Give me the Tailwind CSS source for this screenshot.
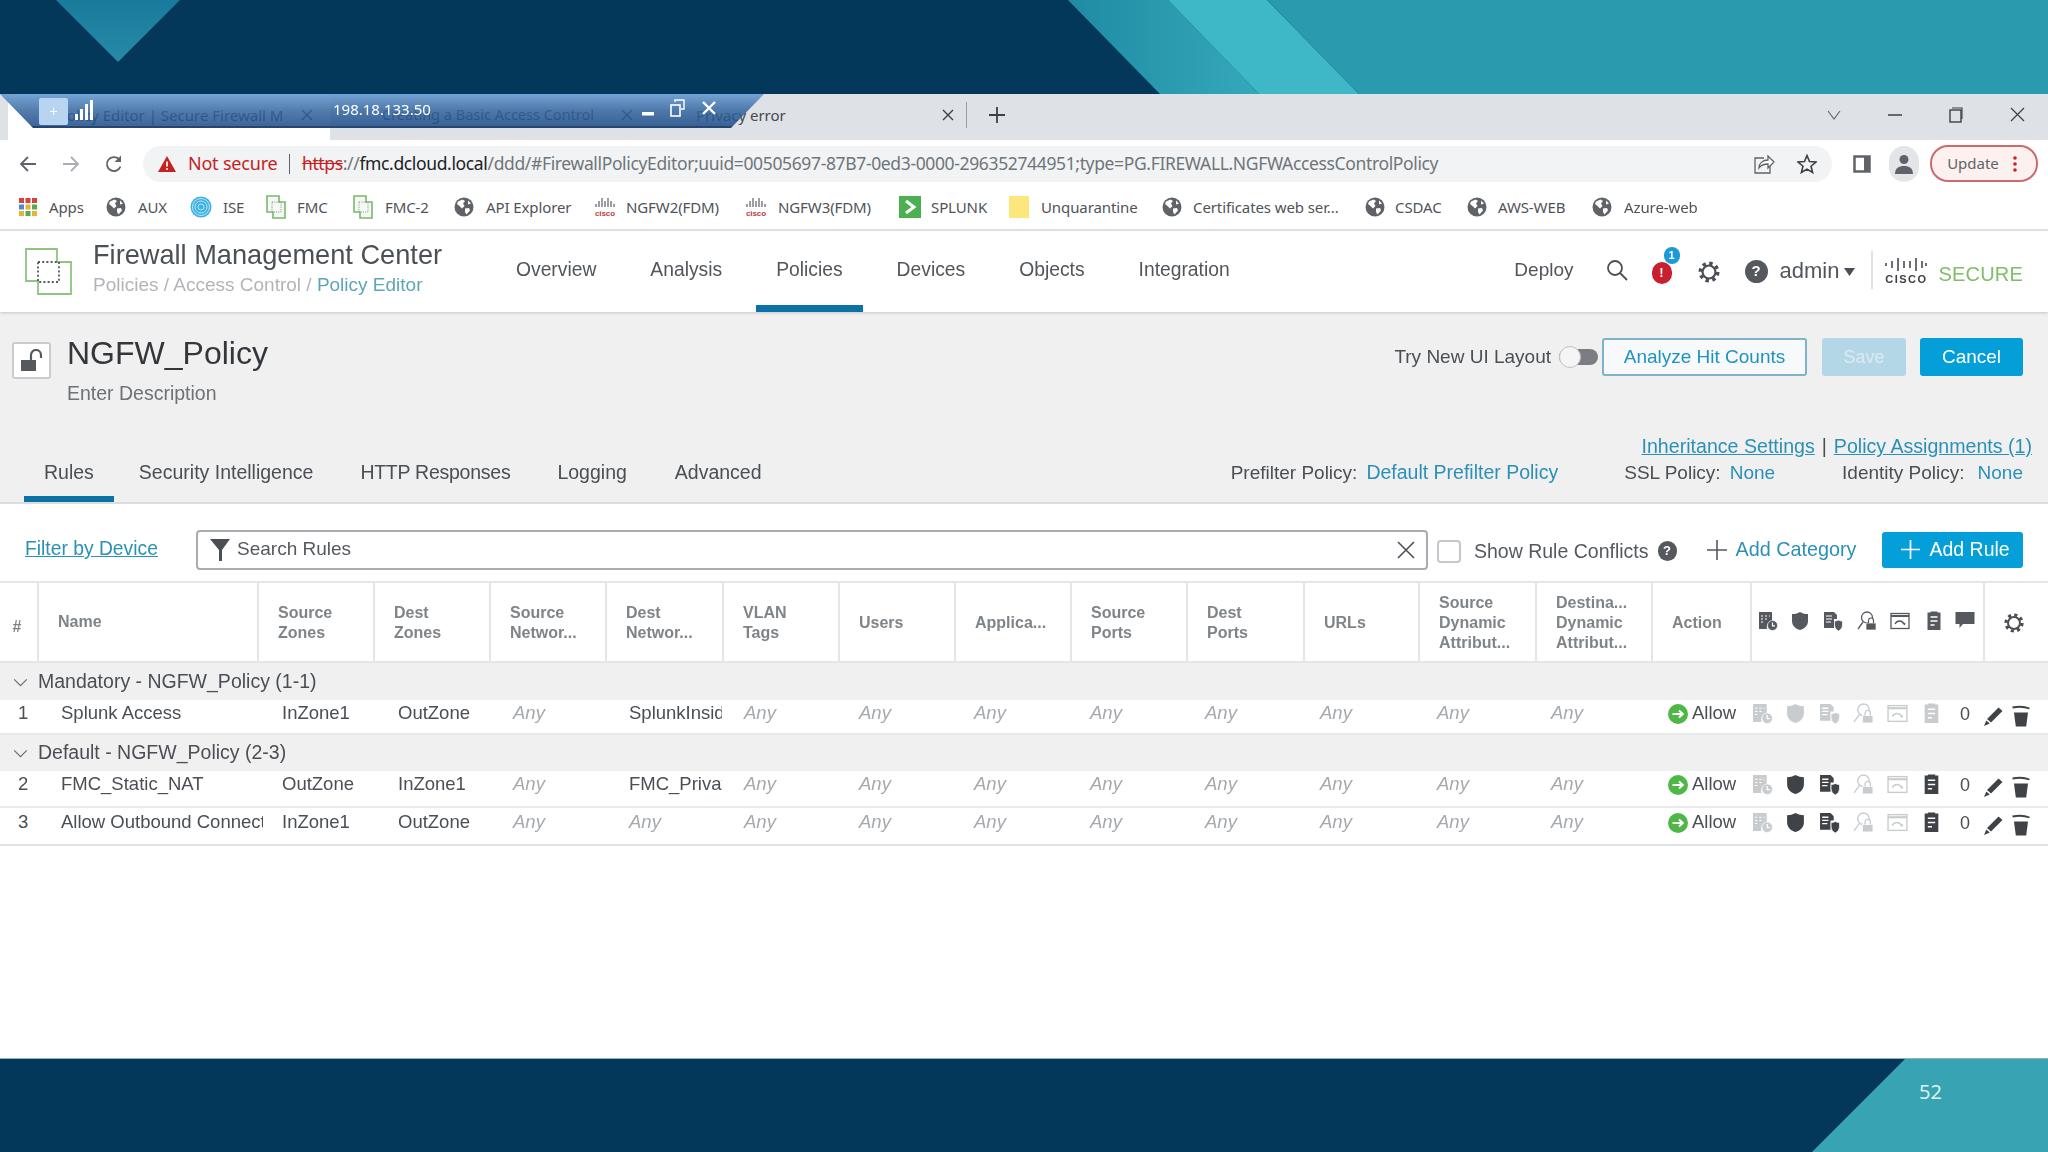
<!DOCTYPE html>
<html lang="en">
<head>
<meta charset="utf-8">
<title>Firewall Management Center</title>
<script src="https://cdn.jsdelivr.net/npm/@tailwindcss/browser@4"></script>
</head>
<body class="bg-white">
<svg class="hidden" xmlns="http://www.w3.org/2000/svg">
  <symbol id="globe" viewBox="0 0 20 20"><circle cx="10" cy="10" r="9.5" fill="#5f6368"/><path d="M4 4.5 8.5 2.5 11 4 9 6.5 10.5 9 8 11.5 5.5 9 3 7ZM11 11.5 15 11 16 13.5 12.5 17.5 11 15ZM14 3.5 17 6.5 14 7.5Z" fill="#fff"/></symbol>
  <symbol id="fmcb" viewBox="0 0 22 24"><path d="M2 1h12v6h6v16H8v-6H2Z" fill="#f4faf2" stroke="#79b96b" stroke-width="1.6"/><rect x="7" y="7" width="9" height="10" fill="none" stroke="#7d8c9c" stroke-dasharray="1 1.3"/></symbol>
  <symbol id="ciscob" viewBox="0 0 22 24"><g stroke="#5a5f66" stroke-width="1.200"><path d="M2 9v3M5 6v6M8 3v9M11 6v6M14 3v9M17 6v6M20 9v3"/></g><text x="11" y="21" text-anchor="middle" font-family="Liberation Sans" font-weight="700" font-size="8" fill="#b3424a">cisco</text></symbol>
  <symbol id="i-sched" viewBox="0 0 20 20"><path d="M1 1h13v9a6 6 0 0 0-5 8H1Z" fill="currentColor"/><path d="M3 5h2M7 5h2M11 5h1M3 8h2M7 8h2M3 11h2" stroke="#fff" stroke-width="1"/><circle cx="14.5" cy="14.5" r="5" fill="currentColor" stroke="#fff" stroke-width=".6"/><path d="M14.5 11.5v3.3h2.5" stroke="#fff" stroke-width="1.2" fill="none"/></symbol>
  <symbol id="i-shield" viewBox="0 0 20 20"><path d="M10 1c3 1.700 5 2 8 2v7c0 5-4 8-8 9-4-1-8-4-8-9V3c3 0 5-.3 8-2Z" fill="currentColor"/></symbol>
  <symbol id="i-docsh" viewBox="0 0 20 20"><path d="M1 1h10l3 3v4h-3v9H1Z" fill="currentColor"/><path d="M3 5h6M3 8h6M3 11h5" stroke="#fff" stroke-width="1.2"/><path d="M15.500 9c1.300.8 2.500 1 4 1v4c0 3-2 5-4 6-2-1-4-3-4-6v-4c1.500 0 2.700-.2 4-1Z" fill="currentColor" stroke="#fff" stroke-width=".7"/></symbol>
  <symbol id="i-user" viewBox="0 0 20 20"><circle cx="10" cy="6.500" r="5.500" fill="none" stroke="currentColor" stroke-width="1.300"/><path d="M6 11 1 18" stroke="currentColor" stroke-width="1.300"/><rect x="9" y="12" width="10" height="7" fill="currentColor" stroke="#fff" stroke-width=".7"/><path d="M11.500 12V9.500a2.500 2.500 0 0 1 5 0V12" fill="#fff" stroke="currentColor" stroke-width="1.200"/></symbol>
  <symbol id="i-win" viewBox="0 0 20 20"><rect x="1" y="2.500" width="18" height="15" fill="none" stroke="currentColor" stroke-width="1.300"/><path d="M1 5h18" stroke="currentColor" stroke-width="2"/><path d="M5 13c2-4 7-4 9 0" fill="none" stroke="currentColor" stroke-width="1.300"/><path d="M14.800 14.500 12.500 12.500 15.500 11.500Z" fill="currentColor"/></symbol>
  <symbol id="i-clip" viewBox="0 0 20 20"><path d="M3.500 1.500h3V.500h7v1h3V19h-13Z" fill="currentColor"/><path d="M6.500 6h7M6.500 10h7M6.500 14h4" stroke="#fff" stroke-width="1.300"/></symbol>
  <symbol id="i-comment" viewBox="0 0 20 20"><path d="M.5 2h19v12H8l-3.500 4v-4h-4Z" fill="currentColor"/></symbol>
  <symbol id="i-pencil" viewBox="0 0 20 20"><path d="M14.500 1.500 18.500 5 7 16.500l-4-3.500ZM2.300 14.500l3.500 3L0 20Z" fill="currentColor"/></symbol>
  <symbol id="i-trash" viewBox="0 0 20 22"><path d="M3 7.500h14l-1.800 14H4.800Z" fill="currentColor"/><path d="M1.500 2.500c6-1.200 11.500-1.200 17 1" fill="none" stroke="currentColor" stroke-width="1.800"/></symbol>
  <symbol id="i-gear" viewBox="0 0 24 24"><circle cx="12" cy="12" r="6.500" fill="none" stroke="currentColor" stroke-width="2.200"/><circle cx="12" cy="12" r="8.800" fill="none" stroke="currentColor" stroke-width="3.400" stroke-dasharray="3.400 3.510"/></symbol>
  <symbol id="i-allow" viewBox="0 0 20 20"><circle cx="10" cy="10" r="10" fill="#4fb748"/><path d="M4.500 10H14M11 6.500l3.800 3.500-3.800 3.500" stroke="#fff" stroke-width="2" fill="none"/></symbol>
  <symbol id="i-chev" viewBox="0 0 16 10"><path d="M1 1.500 8 8.500 15 1.500" fill="none" stroke="#6b7177" stroke-width="1.400"/></symbol>
</svg>

<div class="w-[2048px] h-[1152px] overflow-hidden relative flex flex-col blur-[0.3px] font-['Liberation_Sans',Arial,sans-serif] text-[#4a4f55]">

  <!-- slide banner -->
  <div class="relative h-[94px] shrink-0 bg-[#04385a]">
    <svg class="absolute inset-0" width="2048" height="94" viewBox="0 0 2048 94">
      <defs>
        <linearGradient id="tri" x1="0" y1="0" x2="0" y2="1"><stop offset="0" stop-color="#1a7a9b"/><stop offset="1" stop-color="#2789a8"/></linearGradient>
        <linearGradient id="stripe" x1="0" y1="0" x2="1" y2="0"><stop offset="0" stop-color="#1f8ba3"/><stop offset="1" stop-color="#35a9bb"/></linearGradient>
      </defs>
      <polygon points="56,0 180,0 118,62" fill="url(#tri)"/>
      <polygon points="1068,0 1168,0 1259,94 1160,94" fill="url(#stripe)"/>
      <polygon points="1168,0 1267,0 1359,94 1259,94" fill="#3eb7c7"/>
      <polygon points="1267,0 2048,0 2048,94 1359,94" fill="#2a9aae"/>
    </svg>
  </div>

  <!-- browser tab strip -->
  <div class="h-[46px] shrink-0 bg-[#dee1e6] flex items-stretch font-['Noto_Sans',sans-serif] text-[15px] text-[#45494e]">
    <div class="ml-[8px] w-[322px] bg-white rounded-t-[10px] flex items-center pl-[50px] pb-[4px]">
      <span class="w-[224px] whitespace-nowrap">Policy Editor | Secure Firewall M</span>
      <svg class="ml-[18px]" width="14" height="14" viewBox="0 0 14 14"><path d="M2 2 12 12M12 2 2 12" stroke="#3c4043" stroke-width="1.400"/></svg>
    </div>
    <div class="w-[330px] flex items-center pl-[52px] pb-[4px]">
      <span class="w-[214px] text-[14.500px] whitespace-nowrap">Creating a Basic Access Control</span>
      <svg class="ml-[24px]" width="14" height="14" viewBox="0 0 14 14"><path d="M2 2 12 12M12 2 2 12" stroke="#3c4043" stroke-width="1.400"/></svg>
    </div>
    <div class="w-[297px] flex items-center pl-[36px] pb-[4px]">
      <span class="w-[245px] whitespace-nowrap">Privacy error</span>
      <svg width="14" height="14" viewBox="0 0 14 14"><path d="M2 2 12 12M12 2 2 12" stroke="#3c4043" stroke-width="1.400"/></svg>
    </div>
    <div class="self-center mb-[4px] ml-[9px] w-px h-[26px] bg-[#9aa0a6]"></div>
    <svg class="self-center mb-[4px] ml-[22px]" width="16" height="16" viewBox="0 0 16 16"><path d="M8 0v16M0 8h16" stroke="#3c4043" stroke-width="1.800"/></svg>
    <div class="ml-auto flex items-center pb-[5px]">
      <svg width="14" height="10" viewBox="0 0 14 10"><path d="M1 1 7 9 13 1" fill="none" stroke="#5f6368" stroke-width="1.100"/></svg>
      <svg class="ml-[47px]" width="14" height="2" viewBox="0 0 14 2"><path d="M0 1h14" stroke="#3c4043" stroke-width="1.500"/></svg>
      <svg class="ml-[47px]" width="14" height="16" viewBox="0 0 14 16"><rect x="1" y="3" width="11" height="12" fill="none" stroke="#3c4043" stroke-width="1.400"/><path d="M3 1h10v11" fill="none" stroke="#3c4043" stroke-width="1.100"/></svg>
      <svg class="ml-[47px] mr-[23px]" width="15" height="15" viewBox="0 0 15 15"><path d="M1 1 14 14M14 1 1 14" stroke="#3c4043" stroke-width="1.200"/></svg>
    </div>
  </div>

  <!-- remote desktop connection bar (floats over the tabs) -->
  <div class="absolute left-0 top-[94px] w-[764px] h-[34px] [clip-path:polygon(0_0,764px_0,731px_100%,33px_100%)] bg-gradient-to-b from-[#6f9fd3]/95 via-[#35679f]/85 to-[#1c4a88]/85 border-b-2 border-[#26466f] flex items-center text-white">
    <div class="ml-[39px] w-[29px] h-[27px] mt-[2px] rounded-[2px] bg-[#b9d4f1] flex items-center justify-center text-white text-[14px]">+</div>
    <svg class="ml-[7px]" width="18" height="22" viewBox="0 0 18 22"><g fill="#fff"><rect x="0" y="15" width="3" height="6"/><rect x="5" y="10" width="3" height="11"/><rect x="10" y="5" width="3" height="16"/><rect x="15" y="1" width="3" height="20"/></g></svg>
    <span class="ml-[240px] mb-[2px] text-[15px] font-['Noto_Sans',sans-serif]">198.18.133.50</span>
    <svg class="ml-[211px] mt-[8px]" width="12" height="4" viewBox="0 0 12 4"><rect width="12" height="3.500" fill="#fff"/></svg>
    <svg class="ml-[16px] mb-[4px]" width="15" height="18" viewBox="0 0 15 18"><rect x="1" y="6" width="9" height="11" fill="none" stroke="#fff" stroke-width="1.600"/><path d="M5 3V1h9v9h-3" fill="none" stroke="#fff" stroke-width="1.400"/></svg>
    <svg class="ml-[17px] mb-[4px]" width="14" height="14" viewBox="0 0 14 14"><path d="M1 1 13 13M13 1 1 13" stroke="#fff" stroke-width="2.400"/></svg>
  </div>

  <!-- browser toolbar -->
  <div class="h-[45px] shrink-0 bg-white flex items-center pt-[2px]">
    <svg class="ml-[19px]" width="18" height="18" viewBox="0 0 18 18"><path d="M17 9H2M9 2 2 9l7 7" fill="none" stroke="#5f6368" stroke-width="1.800"/></svg>
    <svg class="ml-[25px]" width="18" height="18" viewBox="0 0 18 18"><path d="M1 9h15M9 2l7 7-7 7" fill="none" stroke="#a9adb2" stroke-width="1.800"/></svg>
    <svg class="ml-[25px]" width="18" height="18" viewBox="0 0 18 18"><path d="M15.500 11.500A7 7 0 1 1 14 4.200" fill="none" stroke="#5f6368" stroke-width="1.800"/><path d="M16 0.500v6.500h-6.500Z" fill="#5f6368"/></svg>
    <div class="ml-[20px] w-[1691px] h-[36px] rounded-full bg-[#f1f3f4] flex items-center font-['Noto_Sans',sans-serif]">
      <svg class="ml-[15px]" width="18" height="16" viewBox="0 0 18 16"><path d="M9 0 18 16H0Z" fill="#c5221f"/><path d="M9 5.500v5M9 12v2" stroke="#fff" stroke-width="1.700"/></svg>
      <span class="ml-[12px] w-[90px] text-[18px] tracking-[-0.2px] text-[#c5221f] whitespace-nowrap">Not secure</span>
      <span class="ml-[11px] w-px h-[20px] bg-[#5f6368]"></span>
      <span class="ml-[12px] text-[17.500px] tracking-[-0.36px] text-[#70757a] whitespace-nowrap"><span class="text-[#c5221f] line-through">https</span><span class="text-[#70757a]">://</span><span class="text-[#202124]">fmc.dcloud.local</span>/ddd/#FirewallPolicyEditor;uuid=00505697-87B7-0ed3-0000-296352744951;type=PG.FIREWALL.NGFWAccessControlPolicy</span>
      <span class="ml-auto flex items-center">
        <svg width="22" height="20" viewBox="0 0 22 20"><path d="M11 4H2v15h15v-7" fill="none" stroke="#5f6368" stroke-width="1.300"/><path d="M6 14c0-5 4-8 9-8V2l6 6-6 6v-4c-4 0-7 1-9 4Z" fill="#fff" stroke="#5f6368" stroke-width="1.300"/></svg>
        <svg class="ml-[22px] mr-[15px]" width="20" height="20" viewBox="0 0 20 20"><path d="M10 1.500 12.500 7.500 19 8 14 12.200 15.600 18.500 10 15.100 4.400 18.500 6 12.200 1 8 7.500 7.500Z" fill="none" stroke="#3c4043" stroke-width="1.600"/></svg>
      </span>
    </div>
    <svg class="ml-[21px]" width="18" height="18" viewBox="0 0 18 18"><rect x="1.500" y="1.500" width="15" height="15" fill="#fff" stroke="#5f6368" stroke-width="2.500"/><rect x="11" y="1.500" width="6" height="15" fill="#5f6368"/></svg>
    <div class="ml-[18px] w-[30px] h-[36px] rounded-full bg-[#e3e5e8] flex items-center justify-center">
      <svg width="18" height="20" viewBox="0 0 18 20"><circle cx="9" cy="5.500" r="4.500" fill="#5f6368"/><path d="M0 20c0-6 4-8 9-8s9 2 9 8Z" fill="#5f6368"/></svg>
    </div>
    <div class="ml-[11px] w-[108px] h-[37px] rounded-[18px] border-2 border-[#cd6a6c] bg-[#fdf1f0] flex items-center pl-[15px] font-['Noto_Sans',sans-serif] text-[15px] text-[#5f6368]">
      Update
      <svg class="ml-[14px]" width="4" height="16" viewBox="0 0 4 16"><g fill="#c5221f"><circle cx="2" cy="2" r="1.800"/><circle cx="2" cy="8" r="1.800"/><circle cx="2" cy="14" r="1.800"/></g></svg>
    </div>
    <div class="w-[10px]"></div>
  </div>

  <!-- bookmarks -->
  <div class="h-[46px] shrink-0 bg-white border-b-2 border-[#e2e3e5] flex items-center font-['Noto_Sans',sans-serif] text-[15px] tracking-[-0.1px] text-[#4f5358] whitespace-nowrap">
    <svg class="ml-[19px]" width="18" height="18" viewBox="0 0 18 18"><g><rect x="0" y="0" width="5" height="5" fill="#d3453c"/><rect x="6.500" y="0" width="5" height="5" fill="#d3453c"/><rect x="13" y="0" width="5" height="5" fill="#d3453c"/><rect x="0" y="6.500" width="5" height="5" fill="#4b89d8"/><rect x="6.500" y="6.500" width="5" height="5" fill="#e9b236"/><rect x="13" y="6.500" width="5" height="5" fill="#4caf50"/><rect x="0" y="13" width="5" height="5" fill="#e9b236"/><rect x="6.500" y="13" width="5" height="5" fill="#4caf50"/><rect x="13" y="13" width="5" height="5" fill="#e9b236"/></g></svg>
    <span class="ml-[12px] w-[36px]">Apps</span>
    <svg class="ml-[21px]" width="20" height="20"><use href="#globe"/></svg>
    <span class="ml-[12px] w-[31px]">AUX</span>
    <svg class="ml-[21px]" width="22" height="22" viewBox="0 0 22 22"><circle cx="11" cy="11" r="10.500" fill="#39b1e3"/><g fill="none" stroke="#bfe7f7" stroke-width="1"><circle cx="11" cy="11" r="3"/><circle cx="11" cy="11" r="6"/><circle cx="11" cy="11" r="8.500"/></g></svg>
    <span class="ml-[11px] w-[21px]">ISE</span>
    <svg class="ml-[21px]" width="22" height="24"><use href="#fmcb"/></svg>
    <span class="ml-[10px] w-[33px]">FMC</span>
    <svg class="ml-[22px]" width="22" height="24"><use href="#fmcb"/></svg>
    <span class="ml-[11px] w-[47px]">FMC-2</span>
    <svg class="ml-[22px]" width="20" height="20"><use href="#globe"/></svg>
    <span class="ml-[12px] w-[86px]">API Explorer</span>
    <svg class="ml-[22px]" width="22" height="24"><use href="#ciscob"/></svg>
    <span class="ml-[10px] w-[99px]">NGFW2(FDM)</span>
    <svg class="ml-[20px]" width="22" height="24"><use href="#ciscob"/></svg>
    <span class="ml-[11px] w-[98px]">NGFW3(FDM)</span>
    <svg class="ml-[23px]" width="22" height="22" viewBox="0 0 22 22"><rect width="22" height="22" fill="#4caf50"/><path d="M7 5 15 11 7 17" fill="none" stroke="#fff" stroke-width="3"/></svg>
    <span class="ml-[10px] w-[57px]">SPLUNK</span>
    <svg class="ml-[21px]" width="20" height="22" viewBox="0 0 20 22"><rect width="20" height="22" fill="#fbe77b"/></svg>
    <span class="ml-[12px] w-[97px]">Unquarantine</span>
    <svg class="ml-[24px]" width="20" height="20"><use href="#globe"/></svg>
    <span class="ml-[11px] w-[149px]">Certificates web ser...</span>
    <svg class="ml-[23px]" width="20" height="20"><use href="#globe"/></svg>
    <span class="ml-[10px] w-[50px]">CSDAC</span>
    <svg class="ml-[22px]" width="20" height="20"><use href="#globe"/></svg>
    <span class="ml-[11px] w-[71px]">AWS-WEB</span>
    <svg class="ml-[23px]" width="20" height="20"><use href="#globe"/></svg>
    <span class="ml-[12px]">Azure-web</span>
  </div>

  <!-- FMC header -->
  <div class="h-[81px] shrink-0 bg-white shadow-[0_1px_3px_rgba(0,0,0,0.18)] z-10 relative flex items-stretch">
    <svg class="ml-[25px] mt-[17px]" width="47" height="47" viewBox="0 0 47 47"><path d="M1 1h31v13h14v32H13V33H1Z" fill="none" stroke="#8fc483" stroke-width="1.800"/><rect x="13" y="14" width="21" height="20" fill="none" stroke="#55595e" stroke-width="1.800" stroke-dasharray="2 2.200"/></svg>
    <div class="ml-[21px] w-[403px] flex flex-col pt-[8px]">
      <div class="text-[27.200px] leading-[32px] text-[#4b5055] whitespace-nowrap">Firewall Management Center</div>
      <div class="text-[19px] leading-[24px] mt-[2px] text-[#b1b5b9] whitespace-nowrap">Policies / Access Control / <span class="text-[#5ea5b9]">Policy Editor</span></div>
    </div>
    <nav class="flex gap-[14px] text-[19.300px] text-[#51565b] h-full">
      <a class="px-[20px] h-full flex items-center pt-[4px] border-b-[7px] border-transparent">Overview</a>
      <a class="px-[20px] h-full flex items-center pt-[4px] border-b-[7px] border-transparent">Analysis</a>
      <a class="px-[20px] h-full flex items-center pt-[4px] border-b-[7px] border-[#0a72a5]">Policies</a>
      <a class="px-[20px] h-full flex items-center pt-[4px] border-b-[7px] border-transparent">Devices</a>
      <a class="px-[20px] h-full flex items-center pt-[4px] border-b-[7px] border-transparent">Objects</a>
      <a class="px-[20px] h-full flex items-center pt-[4px] border-b-[7px] border-transparent">Integration</a>
    </nav>
    <div class="ml-auto flex items-center pb-[3px] pr-[25px]">
      <span class="text-[19px] text-[#51565b]">Deploy</span>
      <svg class="ml-[32px]" width="22" height="22" viewBox="0 0 22 22"><circle cx="9" cy="9" r="7" fill="none" stroke="#4a4f55" stroke-width="1.800"/><path d="M14 14l7 7" stroke="#4a4f55" stroke-width="1.800"/></svg>
      <div class="relative ml-[24px] w-[20px] h-[22px] rounded-full bg-[#c8202f] text-white text-[13px] font-bold flex items-center justify-center mt-[5px]">!
        <span class="absolute left-[12px] top-[-15px] w-[16px] h-[17px] rounded-full bg-[#1b9ad6] text-white text-[11px] font-bold flex items-center justify-center">1</span>
      </div>
      <svg class="ml-[25px] mt-[3px] text-[#4a4f55]" width="24" height="24"><use href="#i-gear"/></svg>
      <div class="ml-[24px] mt-[3px] w-[23px] h-[23px] rounded-full bg-[#55595e] text-white text-[15px] font-bold flex items-center justify-center">?</div>
      <span class="ml-[12px] text-[22px] text-[#51565b]">admin</span>
      <svg class="ml-[5px] mt-[3px]" width="11" height="8" viewBox="0 0 11 8"><path d="M0 0h11L5.500 8Z" fill="#4a4f55"/></svg>
      <div class="ml-[16px] w-[2px] h-[38px] bg-[#dfe1e3]"></div>
      <div class="ml-[11px] flex flex-col items-center w-[44px] mt-[2px]">
        <svg width="42" height="13" viewBox="0 0 42 13"><g stroke="#3b3f44" stroke-width="1.500"><path d="M1 5v3M7 3v7M13 0v13M19 3v7M25 3v7M31 0v13M37 3v7M41 5v3"/></g></svg>
        <span class="text-[11px] leading-[12px] font-bold tracking-[1.500px] text-[#3b3f44] mt-[2px]">CISCO</span>
      </div>
      <span class="ml-[10px] mt-[7px] text-[20px] tracking-[0.2px] text-[#7fbe69]">SECURE</span>
    </div>
  </div>

  <!-- policy head (grey) -->
  <div class="h-[192px] shrink-0 bg-[#f0f0f0] border-b-2 border-[#dcdddf] flex flex-col">
    <div class="h-[125px] shrink-0 flex items-start">
      <div class="ml-[12px] mt-[30px] w-[39px] h-[37px] bg-white border-2 border-[#c9cbce] rounded-[3px] flex items-center justify-center">
        <svg width="24" height="24" viewBox="0 0 24 24"><rect x="1" y="11" width="15" height="11" fill="#55595e"/><path d="M11 11V6a5 5 0 0 1 10 0v3" fill="none" stroke="#55595e" stroke-width="2.200"/></svg>
      </div>
      <div class="ml-[16px] flex flex-col">
        <div class="mt-[21px] text-[32px] leading-[40px] text-[#33373b]">NGFW_Policy</div>
        <div class="mt-[9px] text-[19.500px] leading-[22px] text-[#6d7277]">Enter Description</div>
      </div>
      <div class="ml-auto flex items-center mt-[26px] pr-[25px]">
        <span class="text-[19px] text-[#4a4f55]">Try New UI Layout</span>
        <div class="ml-[8px] relative w-[39px] h-[16px] rounded-full bg-[#7a7e83]">
          <div class="absolute left-0 top-[-3px] w-[22px] h-[22px] rounded-full bg-[#f5f5f5] border border-[#c2c4c7]"></div>
        </div>
        <div class="ml-[4px] w-[205px] h-[38px] border-2 border-[#7fb3c9] rounded-[3px] bg-[#f7f9fa] flex items-center justify-center text-[19px] text-[#1f93c0]">Analyze Hit Counts</div>
        <div class="ml-[15px] w-[84px] h-[38px] rounded-[3px] bg-[#b3d7e6] flex items-center justify-center text-[18px] text-[#dbeaf1]">Save</div>
        <div class="ml-[14px] w-[103px] h-[38px] rounded-[3px] bg-[#049fd9] flex items-center justify-center text-[19px] text-white">Cancel</div>
      </div>
    </div>
    <div class="h-[20px] shrink-0 flex items-center justify-end pr-[16px] text-[19.600px]">
      <a class="text-[#2b90b8] underline">Inheritance Settings</a>
      <span class="mx-[7px] text-[#4a4f55]">|</span>
      <a class="text-[#2b90b8] underline">Policy Assignments (1)</a>
    </div>
    <div class="flex-1 flex items-stretch text-[19.500px] text-[#4a4f55]">
      <div class="ml-[24px] flex gap-[20px]">
        <a class="px-[20px] pb-[7px] border-b-[6px] border-[#0a72a5] flex items-center">Rules</a>
        <a class="px-[7px] -ml-[2px] flex items-center pb-[13px]">Security Intelligence</a>
        <a class="px-[7px] ml-[13px] flex items-center pb-[13px] tracking-[-0.25px]">HTTP Responses</a>
        <a class="px-[7px] ml-[13px] flex items-center pb-[13px]">Logging</a>
        <a class="px-[7px] ml-[14px] flex items-center pb-[13px]">Advanced</a>
      </div>
      <div class="ml-auto flex items-center pb-[13px] pr-[25px] text-[19px] whitespace-nowrap">
        <span>Prefilter Policy:</span><span class="ml-[9px] text-[19.500px] text-[#2b90b8]">Default Prefilter Policy</span>
        <span class="ml-[66px]">SSL Policy:</span><span class="ml-[9px] text-[#2b90b8]">None</span>
        <span class="ml-[67px]">Identity Policy:</span><span class="ml-[13px] text-[#2b90b8]">None</span>
      </div>
    </div>
  </div>

  <!-- filter row -->
  <div class="h-[79px] shrink-0 bg-white border-b-2 border-[#e4e5e7] flex items-center whitespace-nowrap pt-[14px]">
    <a class="ml-[25px] w-[133px] text-[19.300px] text-[#2b90b8] underline">Filter by Device</a>
    <div class="ml-[38px] w-[1232px] h-[40px] border-2 border-[#a9acb0] rounded-[4px] flex items-center">
      <svg class="ml-[12px]" width="20" height="22" viewBox="0 0 20 22"><path d="M0 0h20l-8 11v11H9V11Z" fill="#4a4f55"/></svg>
      <span class="ml-[7px] text-[19px] text-[#55595e]">Search Rules</span>
      <svg class="ml-auto mr-[11px]" width="18" height="18" viewBox="0 0 18 18"><path d="M1 1 17 17M17 1 1 17" stroke="#4a4f55" stroke-width="1.600"/></svg>
    </div>
    <div class="ml-[9px] w-[24px] h-[23px] bg-white border-2 border-[#c5c7ca] rounded-[4px] mt-[3px]"></div>
    <span class="ml-[13px] mt-[4px] text-[19.500px] text-[#55595e]">Show Rule Conflicts</span>
    <div class="ml-[9px] mt-[3px] w-[19px] h-[20px] rounded-full bg-[#55595e] text-white text-[13px] font-bold flex items-center justify-center">?</div>
    <svg class="ml-[30px] mt-[1px]" width="20" height="20" viewBox="0 0 20 20"><path d="M10 0v20M0 10h20" stroke="#55595e" stroke-width="1.600"/></svg>
    <span class="ml-[9px] text-[19.800px] text-[#2b90b8]">Add Category</span>
    <div class="ml-[26px] w-[141px] h-[36px] rounded-[3px] bg-[#049fd9] flex items-center text-white text-[19.500px]">
      <svg class="ml-[19px]" width="19" height="19" viewBox="0 0 19 19"><path d="M9.500 0v19M0 9.500h19" stroke="#fff" stroke-width="1.700"/></svg>
      <span class="ml-[9px]">Add Rule</span>
    </div>
  </div>

  <!-- rule table -->
  <div class="shrink-0 h-[80px] bg-white border-b-2 border-[#e4e5e7] grid grid-cols-[37px_220px_116px_116px_116px_117px_116px_116px_116px_116px_117px_115px_117px_116px_99px_233px_65px] text-[16px] leading-[20px] font-bold text-[#7f8488]">
    <div class="flex items-center justify-center pt-[10px] pr-[3px]">#</div>
    <div class="border-l-2 border-[#e4e5e7] flex items-center pl-[19px]">Name</div>
    <div class="border-l-2 border-[#e4e5e7] flex items-center pl-[19px] pt-[2px]">Source<br>Zones</div>
    <div class="border-l-2 border-[#e4e5e7] flex items-center pl-[19px] pt-[2px]">Dest<br>Zones</div>
    <div class="border-l-2 border-[#e4e5e7] flex items-center pl-[19px] pt-[2px]">Source<br>Networ...</div>
    <div class="border-l-2 border-[#e4e5e7] flex items-center pl-[19px] pt-[2px]">Dest<br>Networ...</div>
    <div class="border-l-2 border-[#e4e5e7] flex items-center pl-[19px] pt-[2px]">VLAN<br>Tags</div>
    <div class="border-l-2 border-[#e4e5e7] flex items-center pl-[19px] pt-[2px]">Users</div>
    <div class="border-l-2 border-[#e4e5e7] flex items-center pl-[19px] pt-[2px]">Applica...</div>
    <div class="border-l-2 border-[#e4e5e7] flex items-center pl-[19px] pt-[2px]">Source<br>Ports</div>
    <div class="border-l-2 border-[#e4e5e7] flex items-center pl-[19px] pt-[2px]">Dest<br>Ports</div>
    <div class="border-l-2 border-[#e4e5e7] flex items-center pl-[19px] pt-[2px]">URLs</div>
    <div class="border-l-2 border-[#e4e5e7] flex items-center pl-[19px] pt-[2px]">Source<br>Dynamic<br>Attribut...</div>
    <div class="border-l-2 border-[#e4e5e7] flex items-center pl-[19px] pt-[2px]">Destina...<br>Dynamic<br>Attribut...</div>
    <div class="border-l-2 border-[#e4e5e7] flex items-center pl-[19px] pt-[2px]">Action</div>
    <div class="border-l-2 border-[#e4e5e7] flex items-center pl-[6px] pb-[2px] text-[#55595e]">
      <svg width="20" height="20"><use href="#i-sched"/></svg>
      <svg class="ml-[12px]" width="20" height="20"><use href="#i-shield"/></svg>
      <svg class="ml-[13px]" width="20" height="20"><use href="#i-docsh"/></svg>
      <svg class="ml-[14px]" width="20" height="20"><use href="#i-user"/></svg>
      <svg class="ml-[13px]" width="20" height="20"><use href="#i-win"/></svg>
      <svg class="ml-[14px]" width="20" height="20"><use href="#i-clip"/></svg>
      <svg class="ml-[11px] mb-[3px]" width="20" height="20"><use href="#i-comment"/></svg>
    </div>
    <div class="border-l-2 border-[#e4e5e7] flex items-center justify-center pr-[6px] pt-[2px] text-[#4a4f55]">
      <svg width="22" height="22"><use href="#i-gear"/></svg>
    </div>
  </div>

  <!-- Mandatory -->
  <div class="shrink-0 h-[37px] bg-[#f0f0f0] flex items-center text-[19.500px] text-[#4a4f55]">
    <svg class="ml-[13px] mt-[1px]" width="15" height="9"><use href="#i-chev"/></svg>
    <span class="ml-[10px]">Mandatory - NGFW_Policy (1-1)</span>
  </div>
  <div class="shrink-0 h-[35px] bg-white border-b-2 border-[#e8e9ea] grid grid-cols-[37px_220px_116px_116px_116px_117px_116px_116px_116px_116px_117px_115px_117px_116px_99px_233px_65px] items-start pt-[1px] text-[18.500px] leading-[24px] text-[#4a4f55] whitespace-nowrap">
    <div class="pl-[18px]">1</div>
    <div class="pl-[24px]"><div class="w-[202px] overflow-hidden">Splunk Access</div></div>
    <div class="pl-[25px]">InZone1</div>
    <div class="pl-[25px]">OutZone</div>
    <div class="pl-[24px] italic text-[#a5a9ad]">Any</div>
    <div class="pl-[24px] overflow-hidden">SplunkInside</div>
    <div class="pl-[22px] italic text-[#a5a9ad]">Any</div>
    <div class="pl-[21px] italic text-[#a5a9ad]">Any</div>
    <div class="pl-[20px] italic text-[#a5a9ad]">Any</div>
    <div class="pl-[20px] italic text-[#a5a9ad]">Any</div>
    <div class="pl-[19px] italic text-[#a5a9ad]">Any</div>
    <div class="pl-[17px] italic text-[#a5a9ad]">Any</div>
    <div class="pl-[19px] italic text-[#a5a9ad]">Any</div>
    <div class="pl-[16px] italic text-[#a5a9ad]">Any</div>
    <div class="pl-[17px] flex items-center"><svg class="mt-[2px]" width="20" height="20"><use href="#i-allow"/></svg><span class="ml-[4px]">Allow</span></div>
    <div class="flex items-center pl-[2px] mt-[2px] text-[#c9ccce]">
      <svg width="21" height="21"><use href="#i-sched"/></svg>
      <svg class="ml-[12px]" width="21" height="21"><use href="#i-shield"/></svg>
      <svg class="ml-[13px]" width="21" height="21"><use href="#i-docsh"/></svg>
      <svg class="ml-[13px]" width="21" height="21"><use href="#i-user"/></svg>
      <svg class="ml-[13px]" width="21" height="21"><use href="#i-win"/></svg>
      <svg class="ml-[13px]" width="21" height="21"><use href="#i-clip"/></svg>
    </div>
    <div class="flex items-center -ml-[23px] mt-[-1px]">
      <span class="w-[17px] text-[18px]">0</span>
      <svg class="ml-[7px] mt-[5px] text-[#3f4347]" width="20" height="20"><use href="#i-pencil"/></svg>
      <svg class="ml-[7px] mt-[5px] text-[#3f4347]" width="20" height="22"><use href="#i-trash"/></svg>
    </div>
  </div>

  <!-- Default -->
  <div class="shrink-0 h-[36px] bg-[#f0f0f0] flex items-center text-[19.500px] text-[#4a4f55]">
    <svg class="ml-[13px] mt-[1px]" width="15" height="9"><use href="#i-chev"/></svg>
    <span class="ml-[10px]">Default - NGFW_Policy (2-3)</span>
  </div>
  <div class="shrink-0 h-[37px] bg-white border-b-2 border-[#e8e9ea] grid grid-cols-[37px_220px_116px_116px_116px_117px_116px_116px_116px_116px_117px_115px_117px_116px_99px_233px_65px] items-start pt-[1px] text-[18.500px] leading-[24px] text-[#4a4f55] whitespace-nowrap">
    <div class="pl-[18px]">2</div>
    <div class="pl-[24px]"><div class="w-[202px] overflow-hidden">FMC_Static_NAT</div></div>
    <div class="pl-[25px]">OutZone</div>
    <div class="pl-[25px]">InZone1</div>
    <div class="pl-[24px] italic text-[#a5a9ad]">Any</div>
    <div class="pl-[24px] overflow-hidden">FMC_Private</div>
    <div class="pl-[22px] italic text-[#a5a9ad]">Any</div>
    <div class="pl-[21px] italic text-[#a5a9ad]">Any</div>
    <div class="pl-[20px] italic text-[#a5a9ad]">Any</div>
    <div class="pl-[20px] italic text-[#a5a9ad]">Any</div>
    <div class="pl-[19px] italic text-[#a5a9ad]">Any</div>
    <div class="pl-[17px] italic text-[#a5a9ad]">Any</div>
    <div class="pl-[19px] italic text-[#a5a9ad]">Any</div>
    <div class="pl-[16px] italic text-[#a5a9ad]">Any</div>
    <div class="pl-[17px] flex items-center"><svg class="mt-[2px]" width="20" height="20"><use href="#i-allow"/></svg><span class="ml-[4px]">Allow</span></div>
    <div class="flex items-center pl-[2px] mt-[2px] text-[#c9ccce]">
      <svg width="21" height="21"><use href="#i-sched"/></svg>
      <svg class="ml-[12px] text-[#3f4347]" width="21" height="21"><use href="#i-shield"/></svg>
      <svg class="ml-[13px] text-[#3f4347]" width="21" height="21"><use href="#i-docsh"/></svg>
      <svg class="ml-[13px]" width="21" height="21"><use href="#i-user"/></svg>
      <svg class="ml-[13px]" width="21" height="21"><use href="#i-win"/></svg>
      <svg class="ml-[13px] text-[#3f4347]" width="21" height="21"><use href="#i-clip"/></svg>
    </div>
    <div class="flex items-center -ml-[23px] mt-[-1px]">
      <span class="w-[17px] text-[18px]">0</span>
      <svg class="ml-[7px] mt-[5px] text-[#3f4347]" width="20" height="20"><use href="#i-pencil"/></svg>
      <svg class="ml-[7px] mt-[5px] text-[#3f4347]" width="20" height="22"><use href="#i-trash"/></svg>
    </div>
  </div>
  <div class="shrink-0 h-[38px] bg-white border-b-2 border-[#e0e1e3] grid grid-cols-[37px_220px_116px_116px_116px_117px_116px_116px_116px_116px_117px_115px_117px_116px_99px_233px_65px] items-start pt-[2px] text-[18.500px] leading-[24px] text-[#4a4f55] whitespace-nowrap">
    <div class="pl-[18px]">3</div>
    <div class="pl-[24px]"><div class="w-[202px] overflow-hidden">Allow Outbound Connection</div></div>
    <div class="pl-[25px]">InZone1</div>
    <div class="pl-[25px]">OutZone</div>
    <div class="pl-[24px] italic text-[#a5a9ad]">Any</div>
    <div class="pl-[24px] italic text-[#a5a9ad]">Any</div>
    <div class="pl-[22px] italic text-[#a5a9ad]">Any</div>
    <div class="pl-[21px] italic text-[#a5a9ad]">Any</div>
    <div class="pl-[20px] italic text-[#a5a9ad]">Any</div>
    <div class="pl-[20px] italic text-[#a5a9ad]">Any</div>
    <div class="pl-[19px] italic text-[#a5a9ad]">Any</div>
    <div class="pl-[17px] italic text-[#a5a9ad]">Any</div>
    <div class="pl-[19px] italic text-[#a5a9ad]">Any</div>
    <div class="pl-[16px] italic text-[#a5a9ad]">Any</div>
    <div class="pl-[17px] flex items-center"><svg class="mt-[2px]" width="20" height="20"><use href="#i-allow"/></svg><span class="ml-[4px]">Allow</span></div>
    <div class="flex items-center pl-[2px] mt-[2px] text-[#c9ccce]">
      <svg width="21" height="21"><use href="#i-sched"/></svg>
      <svg class="ml-[12px] text-[#3f4347]" width="21" height="21"><use href="#i-shield"/></svg>
      <svg class="ml-[13px] text-[#3f4347]" width="21" height="21"><use href="#i-docsh"/></svg>
      <svg class="ml-[13px]" width="21" height="21"><use href="#i-user"/></svg>
      <svg class="ml-[13px]" width="21" height="21"><use href="#i-win"/></svg>
      <svg class="ml-[13px] text-[#3f4347]" width="21" height="21"><use href="#i-clip"/></svg>
    </div>
    <div class="flex items-center -ml-[23px] mt-[-1px]">
      <span class="w-[17px] text-[18px]">0</span>
      <svg class="ml-[7px] mt-[5px] text-[#3f4347]" width="20" height="20"><use href="#i-pencil"/></svg>
      <svg class="ml-[7px] mt-[5px] text-[#3f4347]" width="20" height="22"><use href="#i-trash"/></svg>
    </div>
  </div>

  <div class="flex-1 bg-white"></div>

  <!-- slide footer -->
  <div class="relative h-[94px] shrink-0 bg-[#04385a] border-t border-[#8fb0c6]">
    <svg class="absolute inset-0" width="2048" height="94" viewBox="0 0 2048 94"><polygon points="1905,0 2048,0 2048,94 1811,94" fill="#38a3b3"/></svg>
    <span class="absolute left-[1919px] top-[21px] text-[20px] leading-[24px] text-[#e4f5f6] font-['Open_Sans',sans-serif]">52</span>
  </div>
</div>
</body>
</html>
